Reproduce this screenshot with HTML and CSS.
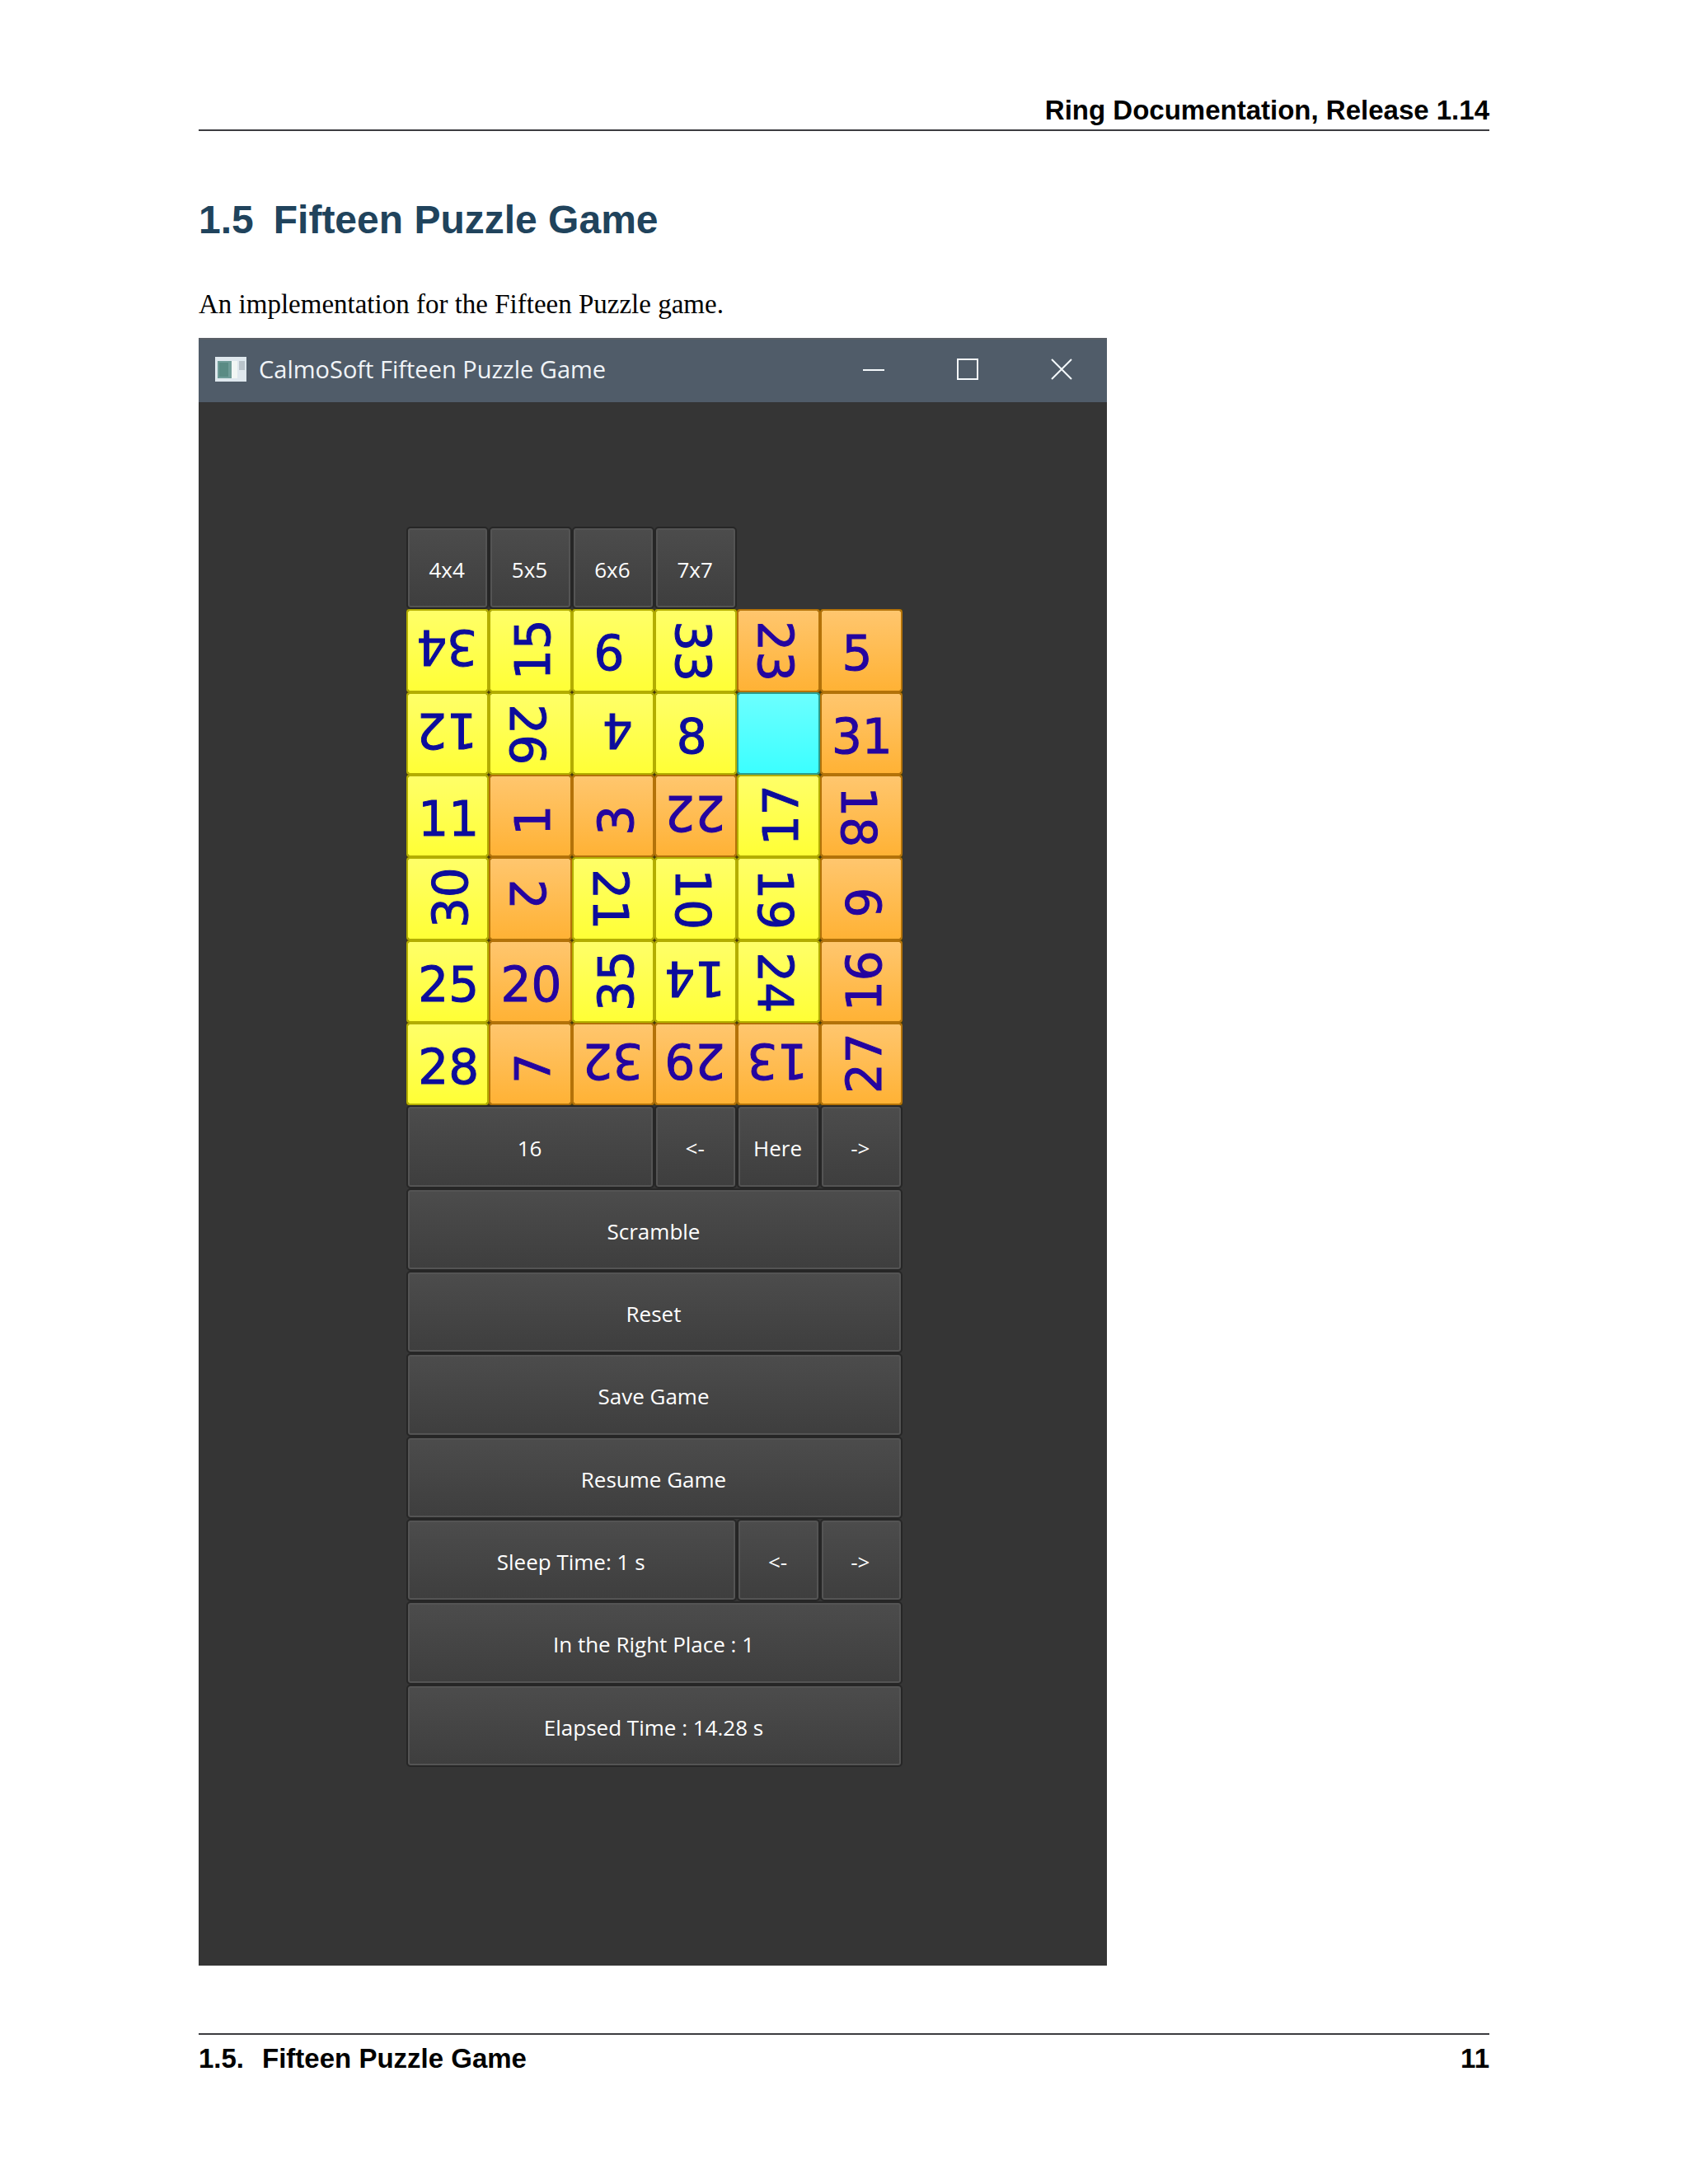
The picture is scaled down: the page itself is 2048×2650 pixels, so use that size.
FILE: index.html
```html
<!DOCTYPE html>
<html lang="en">
<head>
    <meta charset="UTF-8" />
    <title>Fifteen Puzzle Game</title>
    <link rel="stylesheet" href="styles.css">
</head>
<body>
    <div class="page">
        <header class="page-head">Ring Documentation, Release 1.14</header>
        <main>
            <h1><span class="num">1.5</span>Fifteen Puzzle Game</h1>
            <p>An implementation for the Fifteen Puzzle game.</p>
            <section class="window">
                <div class="titlebar">
                    <svg class="app-icon" viewBox="0 0 38 30">
                        <rect width="38" height="30" fill="#dfe8ee"/>
                        <rect x="3" y="5" width="17" height="21" fill="#6f9c98"/>
                        <rect x="5" y="7" width="11" height="17" fill="#5a8b84"/>
                        <rect x="20" y="5" width="7" height="21" fill="#f1f6f4"/>
                        <rect x="29" y="5" width="7" height="11" fill="#b9c3ca"/>
                    </svg>
                    <span class="caption">CalmoSoft Fifteen Puzzle Game</span>
                    <button class="win-btn" aria-label="Minimize">
                        <svg viewBox="0 0 26 26"><path d="M0 14H26"/></svg>
                    </button>
                    <button class="win-btn" aria-label="Maximize">
                        <svg viewBox="0 0 26 26"><rect x="1" y="1" width="24" height="24"/></svg>
                    </button>
                    <button class="win-btn" aria-label="Close">
                        <svg viewBox="0 0 26 26"><path d="M1 1L25 25M25 1L1 25"/></svg>
                    </button>
                </div>
                <div class="game">
                    <div class="sizes">
                        <button class="btn">4x4</button>
                        <button class="btn">5x5</button>
                        <button class="btn">6x6</button>
                        <button class="btn">7x7</button>
                    </div>
                    <div class="board">
                        <button class="tile down"><span>34</span></button>
                        <button class="tile left"><span>15</span></button>
                        <button class="tile one"><span>6</span></button>
                        <button class="tile right"><span>33</span></button>
                        <button class="tile orange right"><span>23</span></button>
                        <button class="tile orange one"><span>5</span></button>

                        <button class="tile down"><span>12</span></button>
                        <button class="tile right"><span>26</span></button>
                        <button class="tile one down"><span>4</span></button>
                        <button class="tile one"><span>8</span></button>
                        <button class="tile empty" aria-label="Empty"></button>
                        <button class="tile orange"><span>31</span></button>

                        <button class="tile"><span>11</span></button>
                        <button class="tile orange one left"><span>1</span></button>
                        <button class="tile orange one left"><span>3</span></button>
                        <button class="tile orange down"><span>22</span></button>
                        <button class="tile left"><span>17</span></button>
                        <button class="tile orange right"><span>18</span></button>

                        <button class="tile left"><span>30</span></button>
                        <button class="tile orange one right"><span>2</span></button>
                        <button class="tile right"><span>21</span></button>
                        <button class="tile right"><span>10</span></button>
                        <button class="tile right"><span>19</span></button>
                        <button class="tile orange one left"><span>9</span></button>

                        <button class="tile"><span>25</span></button>
                        <button class="tile orange"><span>20</span></button>
                        <button class="tile left"><span>35</span></button>
                        <button class="tile down"><span>14</span></button>
                        <button class="tile right"><span>24</span></button>
                        <button class="tile orange left"><span>16</span></button>

                        <button class="tile"><span>28</span></button>
                        <button class="tile orange one left"><span>7</span></button>
                        <button class="tile orange down"><span>32</span></button>
                        <button class="tile orange down"><span>29</span></button>
                        <button class="tile orange down"><span>13</span></button>
                        <button class="tile orange left"><span>27</span></button>
                    </div>
                    <div class="panel">
                        <button class="btn w3">16</button>
                        <button class="btn">&lt;-</button>
                        <button class="btn">Here</button>
                        <button class="btn">-&gt;</button>
                        <button class="btn w6">Scramble</button>
                        <button class="btn w6">Reset</button>
                        <button class="btn w6">Save Game</button>
                        <button class="btn w6">Resume Game</button>
                        <button class="btn w4">Sleep Time: 1 s</button>
                        <button class="btn">&lt;-</button>
                        <button class="btn">-&gt;</button>
                        <button class="btn w6">In the Right Place : 1</button>
                        <button class="btn w6">Elapsed Time : 14.28 s</button>
                    </div>
                </div>
            </section>
        </main>
        <footer class="page-foot">
            <span><span class="num">1.5.</span>Fifteen Puzzle Game</span>
            <span>11</span>
        </footer>
    </div>
</body>
</html>
```

FILE: styles.css
```css
*{
    box-sizing: border-box;
}
body{
    margin: 0;
    background: #fff;
    color: #000;
}
.page{
    padding: 114px 241px 132px;
}
.page-head,.page-foot{
    font: bold 33px/40px "Liberation Sans", Arial, sans-serif;
}
.page-head{
    text-align: right;
    padding-bottom: 3px;
    border-bottom: 2px solid #3c3c40;
}
.page-foot{
    display: flex;
    justify-content: space-between;
    margin-top: 82px;
    padding-top: 9px;
    border-top: 2px solid #3c3c40;
}
.page-foot .num{
    margin-right: 22px;
}
h1{
    margin: 80px 0 54px;
    font: bold 48px/56px "Liberation Sans", Arial, sans-serif;
    color: #20435c;
}
h1 .num{
    margin-right: 24px;
}
p{
    margin: 0 0 21px;
    font: 33px/40px "Liberation Serif", "Times New Roman", serif;
}

/* window */
.window{
    max-width: 1102px;
    background: #353535;
}
.titlebar{
    display: flex;
    align-items: center;
    height: 78px;
    padding: 0 0 2px 20px;
    background: #505c69;
    box-shadow: inset 0 2px #5a5f66;
    color: #f0f4f8;
    font: 29px/40px "Open Sans", "Noto Sans", sans-serif;
}
.app-icon{
    width: 38px;
    height: 30px;
    margin-right: 15px;
}
.caption{
    flex: 1;
}
.win-btn{
    width: 114px;
    height: 76px;
    padding: 0 0 0 4px;
    border: 0;
    background: none;
}
.win-btn svg{
    width: 26px;
    height: 26px;
    vertical-align: top;
    fill: none;
    stroke: #f4f8fb;
    stroke-width: 2;
}

/* game */
.game{
    padding: 151px 0 241px 4px;
    max-width: 606px;
    margin: 0 auto;
}
.sizes,.board,.panel{
    display: grid;
    grid-template-columns: repeat(6, 1fr);
    grid-auto-rows: 1fr;
}
.sizes{
    aspect-ratio: 6 / 1;
}
.board{
    aspect-ratio: 1;
    background: #4a3c08;
}
.panel{
    aspect-ratio: 6 / 8;
}
.btn{
    min-width: 0;
    padding: 4px 2px 0 0;
    border: 2px solid #262626;
    border-radius: 5px;
    background: linear-gradient(#4c4c4c, #3e3e3e);
    box-shadow: inset 0 0 0 2px #545454;
    color: #fff;
    font: 26px/32px "Open Sans", "Noto Sans", sans-serif;
}
.w3{
    grid-column: span 3;
}
.w4{
    grid-column: span 4;
}
.w6{
    grid-column: span 6;
}
.tile{
    min-width: 0;
    padding: 0;
    border: 2px solid #b3ad00;
    border-radius: 4px;
    background: linear-gradient(#ffff68, #ffff36) padding-box;
    color: #0c0c9c;
    font: 58px/58px "DejaVu Sans", Verdana, sans-serif;
    -webkit-text-stroke: 1px;
}
.tile span{
    display: flex;
    align-items: center;
    justify-content: center;
    height: 100%;
    padding: 8px 0 0 2px;
}
.one span{
    padding: 8px 10px 0 0;
}
.orange{
    border-color: #b37209;
    background: linear-gradient(#ffc66e, #ffb235) padding-box;
    color: #2404a0;
}
.empty{
    border-color: #2a9c8c;
    background: linear-gradient(#6cffff, #3cffff) padding-box;
}
.down span{
    transform: rotate(180deg);
}
.left span{
    transform: rotate(-90deg);
}
.right span{
    transform: rotate(90deg);
}
```
